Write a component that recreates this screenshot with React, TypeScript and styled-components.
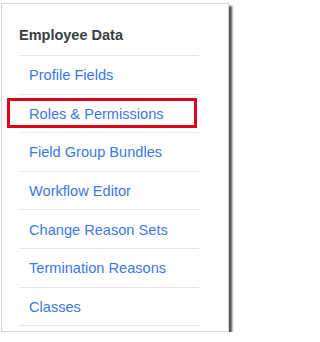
import styled, { createGlobalStyle } from 'styled-components';

const GlobalStyle = createGlobalStyle`
  html, body {
    margin: 0;
    padding: 0;
    background: #ffffff;
  }
  body {
    font-family: "Liberation Sans", Arial, sans-serif;
  }
`;

// 設定メニューのカード
const Card = styled.div`
  box-sizing: border-box;
  width: 228px;
  height: 329px;
  margin: 3px 0 0 1px;
  padding: 21px 29px 6px 17px;
  background: #ffffff;
  border: 1px solid #d6d6d6;
  box-shadow: 3px 3px 2px rgba(50, 50, 50, 0.85);
`;

const Title = styled.h3`
  margin: 0;
  padding-bottom: 10px;
  border-bottom: 1px solid #e6e6e6;
  font-size: 14.5px;
  line-height: 20px;
  font-weight: 700;
  color: #3a3e44;
`;

const MenuList = styled.ul`
  list-style: none;
  margin: 0;
  padding: 0;
`;

const MenuItem = styled.li`
  position: relative;
  box-sizing: border-box;
  height: 38.6px;
  display: flex;
  align-items: center;
  padding: 1px 0 0 10px;
  border-bottom: 1px solid #e6e6e6;
`;

const MenuLink = styled.a`
  font-size: 14.6px;
  color: #3b79e3;
  text-decoration: none;
  white-space: nowrap;
`;

// 注釈用の赤い枠
const Highlight = styled.span`
  position: absolute;
  top: 3px;
  bottom: 4px;
  left: -12px;
  right: 2px;
  border: 3px solid #e1001a;
  pointer-events: none;
`;

const items = [
  'Profile Fields',
  'Roles & Permissions',
  'Field Group Bundles',
  'Workflow Editor',
  'Change Reason Sets',
  'Termination Reasons',
  'Classes',
];

export default function App() {
  return (
    <>
      <GlobalStyle />
      <Card>
        <Title>Employee Data</Title>
        <MenuList>
          {items.map((label) => (
            <MenuItem key={label}>
              <MenuLink href="#">{label}</MenuLink>
              {label === 'Roles & Permissions' && <Highlight />}
            </MenuItem>
          ))}
        </MenuList>
      </Card>
    </>
  );
}
